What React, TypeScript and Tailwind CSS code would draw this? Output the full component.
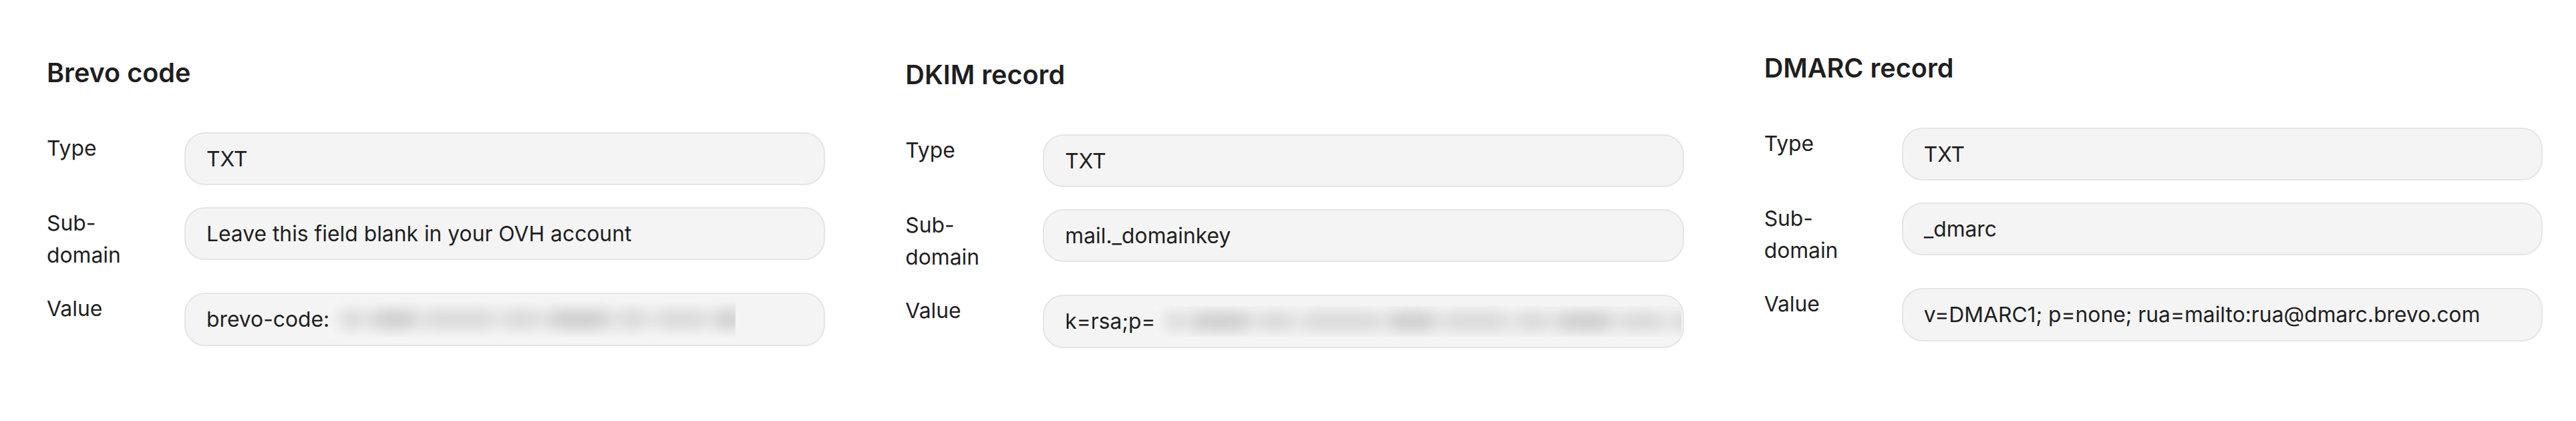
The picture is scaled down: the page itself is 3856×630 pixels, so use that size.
import React from "react";

const blobsA = [40, 70, 110, 60, 95, 50, 80, 45];
const blobsB = [30, 90, 60, 120, 75, 100, 55, 85, 70, 95, 60];

function Blur({ blobs, className }: { blobs: number[]; className: string }) {
  return (
    <span aria-hidden="true" className={"inline-flex items-center overflow-hidden align-middle " + className}>
      <span className="flex items-center gap-[8px] pl-[14px] blur-[12px]">
        {blobs.map((w, i) => (
          <span
            key={i}
            className={"block h-[26px] rounded-[8px] shrink-0 " + (i % 3 === 1 ? "bg-[#c6c6c6]" : "bg-[#d3d3d3]")}
            style={{ width: w }}
          />
        ))}
      </span>
    </span>
  );
}

function Row({ label, children }: { label: React.ReactNode; children: React.ReactNode }) {
  return (
    <div className="flex items-start">
      <div className="w-[206px] shrink-0 leading-[47.6px]">{label}</div>
      <div className="flex-1 min-w-0 h-[79.2px] rounded-[31px] border-[2.2px] border-[#e5e5e5] bg-[#f4f4f4] pl-[31px] pr-[2px] flex items-center overflow-hidden whitespace-nowrap">
        {children}
      </div>
    </div>
  );
}

function Column({
  title,
  top,
  sub,
  value,
}: {
  title: string;
  top: string;
  sub: React.ReactNode;
  value: React.ReactNode;
}) {
  return (
    <div className={"pl-[70px] pr-[50px] " + top}>
      <h2 className="text-[39.6px] font-semibold leading-[48px] text-[#1f1f1f] mb-[65px]">{title}</h2>
      <div className="flex flex-col gap-[33px]">
        <Row label="Type">TXT</Row>
        <Row
          label={
            <>
              Sub-
              <br />
              domain
            </>
          }
        >
          {sub}
        </Row>
        <Row label="Value">{value}</Row>
      </div>
    </div>
  );
}

export default function App() {
  return (
    <div
      className="w-[3856px] h-[630px] bg-white text-[#1f1f1f] text-[31.8px] grid grid-cols-3 items-start"
      style={{ fontFamily: "Inter, 'Noto Sans', sans-serif" }}
    >
      <Column
        title="Brevo code"
        top="pt-[85px]"
        sub="Leave this field blank in your OVH account"
        value={
          <>
            <span>brevo-code:</span>
            <Blur blobs={blobsA} className="w-[608px] h-[54px] bg-[#f7f7f7]" />
          </>
        }
      />
      <Column
        title="DKIM record"
        top="pt-[88px]"
        sub="mail._domainkey"
        value={
          <>
            <span>k=rsa;p=</span>
            <Blur blobs={blobsB} className="flex-1 h-[46px] bg-[#f7f7f7]" />
          </>
        }
      />
      <Column
        title="DMARC record"
        top="pt-[78px]"
        sub="_dmarc"
        value="v=DMARC1; p=none; rua=mailto:rua@dmarc.brevo.com"
      />
    </div>
  );
}
